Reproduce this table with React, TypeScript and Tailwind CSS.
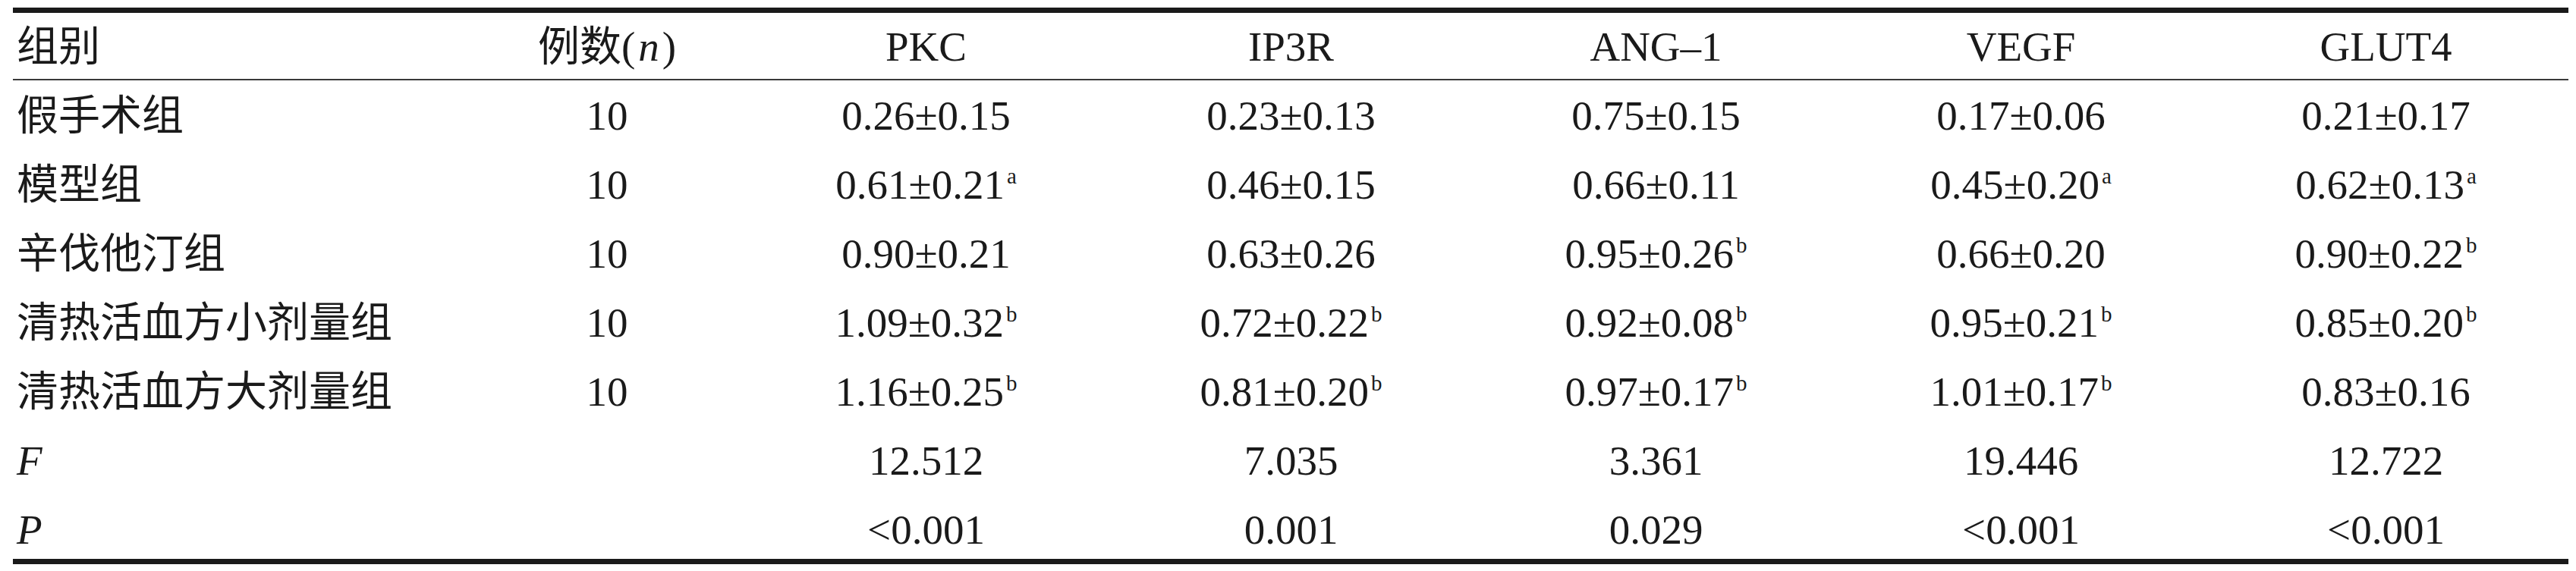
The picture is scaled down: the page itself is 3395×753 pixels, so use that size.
type Val = { v: string; s?: string };

const head = ["PKC", "IP3R", "ANG–1", "VEGF", "GLUT4"];

const rows: { name: string; n: string; vals: Val[] }[] = [
  {
    name: "假手术组",
    n: "10",
    vals: [{ v: "0.26±0.15" }, { v: "0.23±0.13" }, { v: "0.75±0.15" }, { v: "0.17±0.06" }, { v: "0.21±0.17" }],
  },
  {
    name: "模型组",
    n: "10",
    vals: [{ v: "0.61±0.21", s: "a" }, { v: "0.46±0.15" }, { v: "0.66±0.11" }, { v: "0.45±0.20", s: "a" }, { v: "0.62±0.13", s: "a" }],
  },
  {
    name: "辛伐他汀组",
    n: "10",
    vals: [{ v: "0.90±0.21" }, { v: "0.63±0.26" }, { v: "0.95±0.26", s: "b" }, { v: "0.66±0.20" }, { v: "0.90±0.22", s: "b" }],
  },
  {
    name: "清热活血方小剂量组",
    n: "10",
    vals: [{ v: "1.09±0.32", s: "b" }, { v: "0.72±0.22", s: "b" }, { v: "0.92±0.08", s: "b" }, { v: "0.95±0.21", s: "b" }, { v: "0.85±0.20", s: "b" }],
  },
  {
    name: "清热活血方大剂量组",
    n: "10",
    vals: [{ v: "1.16±0.25", s: "b" }, { v: "0.81±0.20", s: "b" }, { v: "0.97±0.17", s: "b" }, { v: "1.01±0.17", s: "b" }, { v: "0.83±0.16" }],
  },
];

const stats = [
  { label: "F", vals: ["12.512", "7.035", "3.361", "19.446", "12.722"] },
  { label: "P", vals: ["<0.001", "0.001", "0.029", "<0.001", "<0.001"] },
];

const grid = "grid grid-cols-[603px_360px_481px_481px_481px_481px_481px]";

function Value({ val }: { val: Val }) {
  return (
    <span>
      {val.v}
      {val.s && <sup className="ml-[3px] text-[29px] top-[-20px]">{val.s}</sup>}
    </span>
  );
}

export default function App() {
  return (
    <div className="w-[3395px] h-[753px] bg-white pt-[10px] pl-[17px] font-['Liberation_Serif','Noto_Sans_CJK_SC',serif] text-[55px] text-[#1a1a1a]">
      <div className="w-[3368px]">
        <div className="h-[7px] bg-[#1a1a1a]" />

        {/* 表头 */}
        <div className={`${grid} h-[87px] pt-[2px] leading-[85px]`}>
          <div className="pl-[5px]">组别</div>
          <div className="text-center">
            例数(<span className="italic mx-[4px]">n</span>)
          </div>
          {head.map((h) => (
            <div key={h} className="text-center">{h}</div>
          ))}
        </div>
        <div className="h-[2px] bg-[#3a3a3a]" />

        <div className="mt-[1px]">
          {rows.map((r) => (
            <div key={r.name} className={`${grid} h-[91px] leading-[91px]`}>
              <div className="pl-[5px] whitespace-nowrap">{r.name}</div>
              <div className="text-center">{r.n}</div>
              {r.vals.map((val, i) => (
                <div key={i} className="text-center">
                  <Value val={val} />
                </div>
              ))}
            </div>
          ))}
          {stats.map((s, k) => (
            <div
              key={s.label}
              className={`${grid} leading-[91px] ${k === stats.length - 1 ? "h-[84px]" : "h-[91px]"}`}
            >
              <div className="pl-[5px] italic">{s.label}</div>
              <div />
              {s.vals.map((v, i) => (
                <div key={i} className="text-center">{v}</div>
              ))}
            </div>
          ))}
        </div>

        <div className="h-[7px] bg-[#1a1a1a]" />
      </div>
    </div>
  );
}
